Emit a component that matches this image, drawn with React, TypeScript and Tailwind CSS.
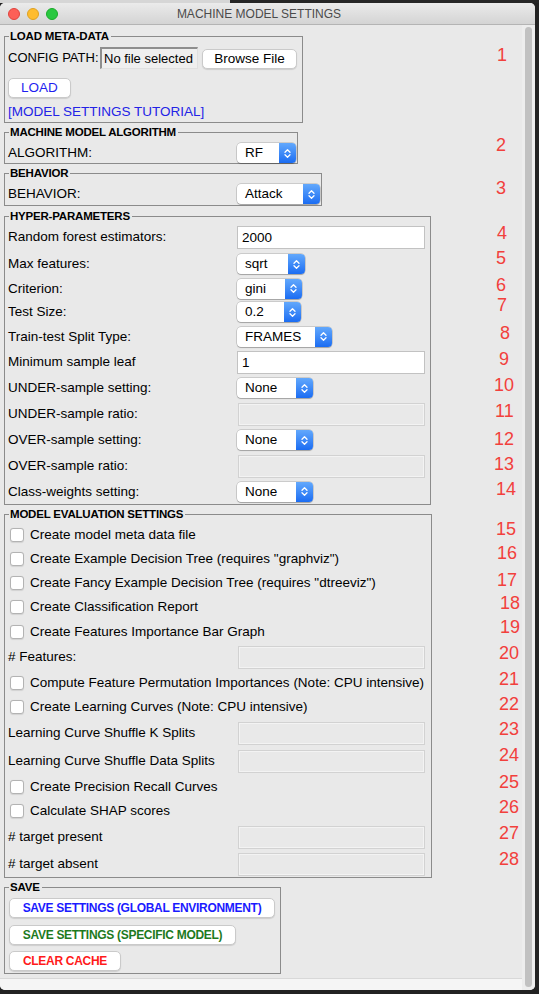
import React from 'react';

type Row =
  | { kind: 'entry'; label: string; value: string; h: string }
  | { kind: 'disabled'; label: string; h: string }
  | { kind: 'select'; label: string; value: string; w: string; h: string }
  | { kind: 'check'; label: string; h: string };

const hyperRows: Row[] = [
  { kind: 'entry', label: 'Random forest estimators:', value: '2000', h: 'h-[28px]' },
  { kind: 'select', label: 'Max features:', value: 'sqrt', w: 'w-[68px]', h: 'h-[26px]' },
  { kind: 'select', label: 'Criterion:', value: 'gini', w: 'w-[65px]', h: 'h-[23px]' },
  { kind: 'select', label: 'Test Size:', value: '0.2', w: 'w-[64px]', h: 'h-[24px]' },
  { kind: 'select', label: 'Train-test Split Type:', value: 'FRAMES', w: 'w-[95px]', h: 'h-[25px]' },
  { kind: 'entry', label: 'Minimum sample leaf', value: '1', h: 'h-[26px]' },
  { kind: 'select', label: 'UNDER-sample setting:', value: 'None', w: 'w-[76px]', h: 'h-[26px]' },
  { kind: 'disabled', label: 'UNDER-sample ratio:', h: 'h-[26px]' },
  { kind: 'select', label: 'OVER-sample setting:', value: 'None', w: 'w-[76px]', h: 'h-[26px]' },
  { kind: 'disabled', label: 'OVER-sample ratio:', h: 'h-[26px]' },
  { kind: 'select', label: 'Class-weights setting:', value: 'None', w: 'w-[76px]', h: 'h-[25px]' },
];

const evalRows: Row[] = [
  { kind: 'check', label: 'Create model meta data file', h: 'h-[24px]' },
  { kind: 'check', label: 'Create Example Decision Tree (requires "graphviz")', h: 'h-[24px]' },
  { kind: 'check', label: 'Create Fancy Example Decision Tree (requires "dtreeviz")', h: 'h-[24px]' },
  { kind: 'check', label: 'Create Classification Report', h: 'h-[24px]' },
  { kind: 'check', label: 'Create Features Importance Bar Graph', h: 'h-[25px]' },
  { kind: 'disabled', label: '# Features:', h: 'h-[26px]' },
  { kind: 'check', label: 'Compute Feature Permutation Importances (Note: CPU intensive)', h: 'h-[25px]' },
  { kind: 'check', label: 'Create Learning Curves (Note: CPU intensive)', h: 'h-[24px]' },
  { kind: 'disabled', label: 'Learning Curve Shuffle K Splits', h: 'h-[28px]' },
  { kind: 'disabled', label: 'Learning Curve Shuffle Data Splits', h: 'h-[28px]' },
  { kind: 'check', label: 'Create Precision Recall Curves', h: 'h-[24px]' },
  { kind: 'check', label: 'Calculate SHAP scores', h: 'h-[24px]' },
  { kind: 'disabled', label: '# target present', h: 'h-[28px]' },
  { kind: 'disabled', label: '# target absent', h: 'h-[26px]' },
];

// red annotation numbers drawn over the window
const marks = [
  { n: '1', c: 'top-[46px] left-[497px]' },
  { n: '2', c: 'top-[136px] left-[496px]' },
  { n: '3', c: 'top-[179px] left-[496px]' },
  { n: '4', c: 'top-[224px] left-[497px]' },
  { n: '5', c: 'top-[249px] left-[496px]' },
  { n: '6', c: 'top-[276px] left-[496px]' },
  { n: '7', c: 'top-[296px] left-[497px]' },
  { n: '8', c: 'top-[324px] left-[500px]' },
  { n: '9', c: 'top-[350px] left-[499px]' },
  { n: '10', c: 'top-[376px] left-[494px]' },
  { n: '11', c: 'top-[402px] left-[495px]' },
  { n: '12', c: 'top-[430px] left-[494px]' },
  { n: '13', c: 'top-[455px] left-[494px]' },
  { n: '14', c: 'top-[480px] left-[496px]' },
  { n: '15', c: 'top-[520px] left-[496px]' },
  { n: '16', c: 'top-[544px] left-[497px]' },
  { n: '17', c: 'top-[571px] left-[497px]' },
  { n: '18', c: 'top-[594px] left-[500px]' },
  { n: '19', c: 'top-[618px] left-[500px]' },
  { n: '20', c: 'top-[644px] left-[499px]' },
  { n: '21', c: 'top-[670px] left-[499px]' },
  { n: '22', c: 'top-[695px] left-[499px]' },
  { n: '23', c: 'top-[720px] left-[499px]' },
  { n: '24', c: 'top-[746px] left-[499px]' },
  { n: '25', c: 'top-[773px] left-[499px]' },
  { n: '26', c: 'top-[798px] left-[499px]' },
  { n: '27', c: 'top-[824px] left-[499px]' },
  { n: '28', c: 'top-[850px] left-[499px]' },
];

function Select({ value, w }: { value: string; w: string }) {
  return (
    <div className={`flex h-[20px] rounded-[4px] bg-white overflow-hidden shadow-[0_0_0_0.5px_rgba(0,0,0,0.25),0_1px_1px_rgba(0,0,0,0.2)] ${w}`}>
      <span className="flex-1 pl-[8px] text-[13.5px] leading-[20px] text-black">{value}</span>
      <span className="w-[17px] flex items-center justify-center bg-gradient-to-b from-[#62a8fc] to-[#1a6cf2]">
        <svg width="9" height="13" viewBox="0 0 9 13" fill="none">
          <path d="M2 5.2 L4.5 2.7 L7 5.2" stroke="white" strokeWidth="1.3" strokeLinecap="round" strokeLinejoin="round" />
          <path d="M2 7.8 L4.5 10.3 L7 7.8" stroke="white" strokeWidth="1.3" strokeLinecap="round" strokeLinejoin="round" />
        </svg>
      </span>
    </div>
  );
}

function FormRow({ row }: { row: Row }) {
  if (row.kind === 'check') {
    return (
      <div className={`flex items-center ${row.h}`}>
        <span className="ml-[2px] w-[14px] h-[14px] rounded-[3px] bg-white border border-[#b3b3b3] shadow-[0_0.5px_1px_rgba(0,0,0,0.1)]" />
        <span className="ml-[6px] text-[13.5px] leading-none text-black whitespace-nowrap">{row.label}</span>
      </div>
    );
  }
  return (
    <div className={`flex items-center ${row.h}`}>
      <span className="w-[229px] text-[13.5px] leading-none text-black whitespace-nowrap">{row.label}</span>
      {row.kind === 'entry' && (
        <div className="w-[188px] h-[23px] bg-white border border-[#c2c2c2] pl-[4px] text-[13.5px] leading-[21px] text-black">
          {row.value}
        </div>
      )}
      {row.kind === 'disabled' && (
        <div className="ml-[1px] w-[187px] h-[23px] bg-[#e9e9e9] border border-[#d2d2d2] shadow-[inset_0_0_0_1px_#f3f3f3]" />
      )}
      {row.kind === 'select' && <Select value={row.value} w={row.w} />}
    </div>
  );
}

function Group({ title, className, children }: { title: string; className: string; children: React.ReactNode }) {
  return (
    <fieldset className={`ml-[4px] border border-[#8b8b8b] pl-[3px] ${className}`}>
      <legend className="ml-[1px] pl-[1px] pr-[2px] h-[14px] text-[11.5px] leading-[14px] font-bold text-black tracking-[-0.2px]">
        {title}
      </legend>
      {children}
    </fieldset>
  );
}

const saveBtn =
  'ml-[1px] block h-[20px] rounded-[5px] bg-white border border-[#cacaca] shadow-[0_1px_1px_rgba(0,0,0,0.12)] text-[12px] font-bold tracking-[-0.3px] leading-none';

export default function App() {
  return (
    <div className="relative w-[539px] h-[994px] bg-[#222222] overflow-hidden font-['Liberation_Sans',Arial,sans-serif]">
      <div className="flex h-[3px]">
        <div className="w-[230px] bg-[#d6d6d6]" />
        <div className="flex-1 bg-[#262626]" />
      </div>

      <div className="w-[535px] h-[987px] rounded-[5px] bg-[#e9e9e9] flex flex-col overflow-hidden">
        {/* title bar */}
        <div className="grid h-[22px] border-b border-[#b4b4b4] bg-gradient-to-b from-[#ebebeb] to-[#d4d4d4]">
          <div className="col-start-1 row-start-1 flex items-center pl-[8px] gap-[7px]">
            <span className="w-[12px] h-[12px] rounded-full bg-[#fd5f57] border border-[#e0443e]" />
            <span className="w-[12px] h-[12px] rounded-full bg-[#febc2e] border border-[#dea123]" />
            <span className="w-[12px] h-[12px] rounded-full bg-[#29c840] border border-[#1aab29]" />
          </div>
          <div className="col-start-1 row-start-1 flex items-center justify-center pr-[17px] text-[12px] text-[#4b4b4b]">
            MACHINE MODEL SETTINGS
          </div>
        </div>

        <div className="flex flex-1">
          <div className="flex-1 flex flex-col pt-[4px]">
            <Group title="LOAD META-DATA" className="w-[299px] pb-[2px]">
              <div className="mt-[4px] flex items-start h-[22px] whitespace-nowrap">
                <span className="w-[92px] shrink-0 h-[22px] leading-[22px] text-[13px] text-black">CONFIG PATH:</span>
                <div className="shrink-0 w-[98px] h-[22px] bg-[#efefef] border-t-2 border-l-2 border-b border-r border-t-[#8e8e8e] border-l-[#8e8e8e] border-b-[#e0e0e0] border-r-[#e0e0e0] pl-[2px] text-[13px] leading-[19px] text-black overflow-hidden">
                  No file selected
                </div>
                <button className="shrink-0 ml-[4px] mt-[2px] w-[95px] h-[20px] rounded-[5px] bg-white border border-[#cacaca] shadow-[0_1px_1px_rgba(0,0,0,0.12)] text-[13.5px] text-black leading-none">
                  Browse File
                </button>
              </div>
              <button className="mt-[9px] block w-[63px] h-[20px] rounded-[5px] bg-white border border-[#cacaca] shadow-[0_1px_1px_rgba(0,0,0,0.12)] text-[13.5px] text-[#1f1ff0] leading-none">
                LOAD
              </button>
              <div className="mt-[6px] h-[16px] leading-[16px] text-[13.5px] text-[#2323e6]">[MODEL SETTINGS TUTORIAL]</div>
            </Group>

            <Group title="MACHINE MODEL ALGORITHM" className="mt-[2px] w-[294px]">
              <div className="mt-[4px] flex items-center h-[20px]">
                <span className="w-[229px] text-[13.5px] leading-none text-black">ALGORITHM:</span>
                <Select value="RF" w="w-[59px]" />
              </div>
            </Group>

            <Group title="BEHAVIOR" className="mt-[2px] w-[318px] pb-[1px]">
              <div className="mt-[4px] flex items-center h-[20px]">
                <span className="w-[229px] text-[13.5px] leading-none text-black">BEHAVIOR:</span>
                <Select value="Attack" w="w-[83px]" />
              </div>
            </Group>

            <Group title="HYPER-PARAMETERS" className="mt-[3px] w-[427px]">
              {hyperRows.map((r) => (
                <FormRow key={r.label} row={r} />
              ))}
            </Group>

            <Group title="MODEL EVALUATION SETTINGS" className="mt-[2px] w-[428px] pt-[2px]">
              {evalRows.map((r) => (
                <FormRow key={r.label} row={r} />
              ))}
            </Group>

            <Group title="SAVE" className="mt-[2px] w-[277px] pb-[2px]">
              <button className={`mt-[4px] w-[266px] text-[#1a1aff] ${saveBtn}`}>
                SAVE SETTINGS (GLOBAL ENVIRONMENT)
              </button>
              <button className={`mt-[7px] w-[227px] text-[#1d7a1d] ${saveBtn}`}>
                SAVE SETTINGS (SPECIFIC MODEL)
              </button>
              <button className={`mt-[6px] w-[112px] text-[#ff1a1a] ${saveBtn}`}>
                CLEAR CACHE
              </button>
            </Group>

            <div className="mt-auto h-[12px] bg-[#f5f5f5] border-t border-[#d8d8d8]" />
          </div>

          {/* vertical scrollbar */}
          <div className="w-[13px] pt-[2px] pb-[3px] bg-[#ededed]">
            <div className="ml-[3px] w-[7px] h-full rounded-full bg-[#c1c1c1]" />
          </div>
        </div>
      </div>

      {marks.map((m) => (
        <span key={m.n} className={`absolute text-[18px] leading-[18px] text-[#f2403c] ${m.c}`}>
          {m.n}
        </span>
      ))}
    </div>
  );
}
